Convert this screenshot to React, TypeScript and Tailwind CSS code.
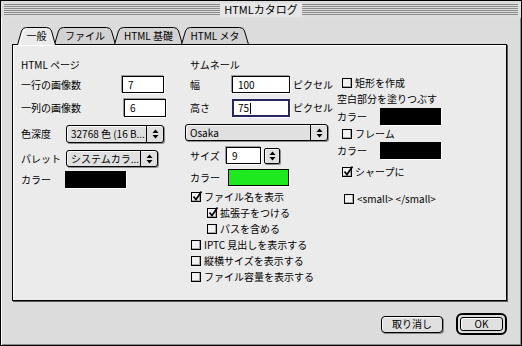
import React from "react";

const Arrows = () => (
  <svg width="7" height="10" viewBox="0 0 7 10">
    <path d="M3.5 0.5 L6.5 4 L0.5 4 Z" fill="#000" />
    <path d="M0.5 6 L6.5 6 L3.5 9.5 Z" fill="#000" />
  </svg>
);

const Check = ({ checked }: { checked?: boolean }) => (
  <div className="relative w-[10px] h-[10px] shrink-0 border border-black bg-[#f2f2f2] shadow-[inset_-1px_-1px_0_#a8a8a8]">
    {checked && (
      <svg className="absolute -top-[3px] -left-[1px]" width="12" height="12" viewBox="0 0 12 12">
        <path d="M2.5 6.5 L5 9.5 L10.5 1.5" fill="none" stroke="#000" strokeWidth="1.7" />
      </svg>
    )}
  </div>
);

const CheckRow = ({ label, checked, className }: { label: string; checked?: boolean; className: string }) => (
  <div className={`flex items-center h-[16px] ${className}`}>
    <Check checked={checked} />
    <span className="ml-[3px] whitespace-nowrap">{label}</span>
  </div>
);

const Popup = ({ text, className }: { text: string; className: string }) => (
  <div
    className={`flex border border-black rounded-[3px] bg-[#e0e0e0] shadow-[1px_1px_0_#8c8c8c,inset_1px_1px_0_#fafafa] ${className}`}
  >
    <div className="flex-1 flex items-center pl-[4px] overflow-hidden whitespace-nowrap">{text}</div>
    <div className="w-[17px] border-l border-black flex items-center justify-center">
      <Arrows />
    </div>
  </div>
);

const Field = ({ text, className }: { text: string; className: string }) => (
  <div
    className={`flex items-center pl-[5px] bg-white border border-black shadow-[-1px_-1px_0_#9a9a9a,1px_1px_0_#ffffff] ${className}`}
  >
    {text}
  </div>
);

const Swatch = ({ className }: { className: string }) => (
  <div className={`border border-black shadow-[1px_1px_0_#ffffff] ${className}`} />
);

const Tab = ({ label, w, active, className }: { label: string; w: number; active?: boolean; className: string }) => (
  <div className={`relative h-[19px] flex items-center justify-center ${className}`}>
    <svg className="absolute inset-0" width={w} height="19" viewBox={`0 0 ${w} 19`}>
      {active ? (
        <>
          <path
            d={`M0.5 19 L4.5 5 Q5.5 1.5 9.5 1.5 L${w - 9.5} 1.5 Q${w - 5.5} 1.5 ${w - 4.5} 5 L${w - 0.5} 19 Z`}
            fill="#ebebeb"
          />
          <path
            d={`M0.5 19 L4.5 5 Q5.5 1.5 9.5 1.5 L${w - 9.5} 1.5 Q${w - 5.5} 1.5 ${w - 4.5} 5 L${w - 0.5} 19`}
            fill="none"
            stroke="#000"
          />
          <path d={`M2.5 19 L6 6 Q7 3 10 2.5`} fill="none" stroke="#fff" />
        </>
      ) : (
        <path
          d={`M0.5 18.5 L4.5 5 Q5.5 1.5 9.5 1.5 L${w - 9.5} 1.5 Q${w - 5.5} 1.5 ${w - 4.5} 5 L${w - 0.5} 18.5 Z`}
          fill="#d2d2d2"
          stroke="#000"
        />
      )}
    </svg>
    <span className="relative pt-[1px] whitespace-nowrap">{label}</span>
  </div>
);

const Stripes = () => (
  <div className="flex-1 h-[12px] flex flex-col justify-between">
    <div className="h-px bg-[#8a8a8a]" />
    <div className="h-px bg-[#8a8a8a]" />
    <div className="h-px bg-[#8a8a8a]" />
    <div className="h-px bg-[#8a8a8a]" />
    <div className="h-px bg-[#8a8a8a]" />
    <div className="h-px bg-[#8a8a8a]" />
  </div>
);

export default function App() {
  return (
    <div className="w-[522px] h-[346px] bg-white">
      <div className="w-[522px] h-[346px] border border-black bg-[#dcdcdc] flex flex-col text-[10px] leading-none text-black font-[family-name:'Noto_Sans_CJK_JP',sans-serif] shadow-[inset_1px_1px_0_#ffffff,inset_-1px_-1px_0_#8a8a8a]">
        {/* Title bar */}
        <div className="h-[17px] flex items-center px-[3px] bg-[#dedede]">
          <Stripes />
          <div className="px-[4px] h-[14px] flex items-center bg-[#e6e6e6] text-[11px]">HTMLカタログ</div>
          <Stripes />
        </div>

        {/* Tabs */}
        <div className="flex pl-[16px] pt-[8px] relative z-10 -mb-px">
          <Tab label="一般" w={39} active className="w-[39px] z-10" />
          <Tab label="ファイル" w={62} className="w-[62px] -ml-[2px]" />
          <Tab label="HTML 基礎" w={69} className="w-[69px] -ml-[2px]" />
          <Tab label="HTML メタ" w={68} className="w-[68px] -ml-[2px]" />
        </div>

        {/* Panel */}
        <div className="ml-[11px] w-[495px] h-[257px] border border-black bg-[#ebebeb] shadow-[1px_1px_0_#5a5a5a,inset_1px_1px_0_#ffffff] flex pl-[8px]">
          {/* Left column */}
          <div className="w-[164px] flex flex-col">
            <div className="mt-[14px] h-[12px] flex items-center">HTML ページ</div>
            <div className="mt-[5px] flex items-center h-[17px]">
              <span className="w-[101px]">一行の画像数</span>
              <Field text="7" className="w-[42px] h-[17px]" />
            </div>
            <div className="mt-[6px] flex items-center h-[18px]">
              <span className="w-[103px]">一列の画像数</span>
              <Field text="6" className="w-[42px] h-[18px]" />
            </div>
            <div className="mt-[8px] flex items-center h-[18px]">
              <span className="w-[45px]">色深度</span>
              <Popup text="32768 色 (16 B..." className="w-[98px] h-[18px]" />
            </div>
            <div className="mt-[7px] flex items-center h-[17px]">
              <span className="w-[45px]">パレット</span>
              <Popup text="システムカラ..." className="w-[92px] h-[17px]" />
            </div>
            <div className="mt-[4px] flex items-center h-[17px]">
              <span className="w-[44px]">カラー</span>
              <Swatch className="w-[61px] h-[17px] bg-black" />
            </div>
          </div>

          {/* Middle column */}
          <div className="w-[152px] flex flex-col">
            <div className="mt-[14px] h-[12px] flex items-center pl-[5px]">サムネール</div>
            <div className="mt-[5px] flex items-center h-[17px]">
              <span className="w-[47px] pl-[5px]">幅</span>
              <Field text="100" className="w-[58px] h-[17px]" />
              <span className="ml-[3px] whitespace-nowrap">ピクセル</span>
            </div>
            <div className="mt-[6px] flex items-center h-[18px]">
              <span className="w-[47px] pl-[5px]">高さ</span>
              <div className="w-[58px] h-[18px] flex items-center pl-[4px] bg-white border-2 border-[#262660] shadow-[1px_1px_0_#ffffff]">
                75<span className="inline-block w-px h-[11px] bg-black ml-px" />
              </div>
              <span className="ml-[3px] whitespace-nowrap">ピクセル</span>
            </div>
            <div className="mt-[7px] flex h-[17px]">
              <Popup text="Osaka" className="w-[143px] h-[17px]" />
            </div>
            <div className="mt-[6px] flex items-center h-[17px]">
              <span className="w-[41px] pl-[5px]">サイズ</span>
              <Field text="9" className="w-[35px] h-[17px]" />
              <div className="ml-[3px] w-[16px] h-[16px] border border-black rounded-[2px] bg-[#e0e0e0] shadow-[1px_1px_0_#8c8c8c,inset_1px_1px_0_#fafafa] flex items-center justify-center">
                <Arrows />
              </div>
            </div>
            <div className="mt-[5px] flex items-center h-[17px]">
              <span className="w-[43px] pl-[5px]">カラー</span>
              <Swatch className="w-[61px] h-[17px] bg-[#1ee81e]" />
            </div>
            <div className="mt-[3px] flex flex-col">
              <CheckRow label="ファイル名を表示" checked className="pl-[6px]" />
              <CheckRow label="拡張子をつける" checked className="pl-[22px]" />
              <CheckRow label="パスを含める" className="pl-[22px]" />
              <CheckRow label="IPTC 見出しを表示する" className="pl-[6px]" />
              <CheckRow label="縦横サイズを表示する" className="pl-[6px]" />
              <CheckRow label="ファイル容量を表示する" className="pl-[6px]" />
            </div>
          </div>

          {/* Right column */}
          <div className="flex-1 flex flex-col">
            <div className="mt-[30px]">
              <CheckRow label="矩形を作成" className="pl-[5px]" />
            </div>
            <div className="h-[15px] flex items-center whitespace-nowrap">空白部分を塗りつぶす</div>
            <div className="mt-[2px] flex items-center h-[17px]">
              <span className="w-[43px]">カラー</span>
              <Swatch className="w-[61px] h-[17px] bg-black" />
            </div>
            <div className="mt-[1px]">
              <CheckRow label="フレーム" className="pl-[5px]" />
            </div>
            <div className="flex items-center h-[17px]">
              <span className="w-[43px]">カラー</span>
              <Swatch className="w-[61px] h-[17px] bg-black" />
            </div>
            <div className="mt-[5px]">
              <CheckRow label="シャープに" checked className="pl-[5px]" />
            </div>
            <div className="mt-[11px]">
              <CheckRow label="<small> </small>" className="pl-[7px]" />
            </div>
          </div>
        </div>

        {/* Buttons */}
        <div className="mt-[12px] flex items-center justify-end pr-[14px] gap-[13px]">
          <div className="w-[62px] h-[17px] border border-black rounded-[4px] bg-[#e0e0e0] shadow-[1px_1px_0_#8c8c8c,inset_1px_1px_0_#fafafa] flex items-center justify-center">
            取り消し
          </div>
          <div className="w-[51px] h-[22px] border-[2px] border-black rounded-[6px] p-[2px] flex">
            <div className="flex-1 border border-black rounded-[3px] bg-[#e0e0e0] shadow-[inset_1px_1px_0_#fafafa] flex items-center justify-center">
              OK
            </div>
          </div>
        </div>
      </div>
    </div>
  );
}
